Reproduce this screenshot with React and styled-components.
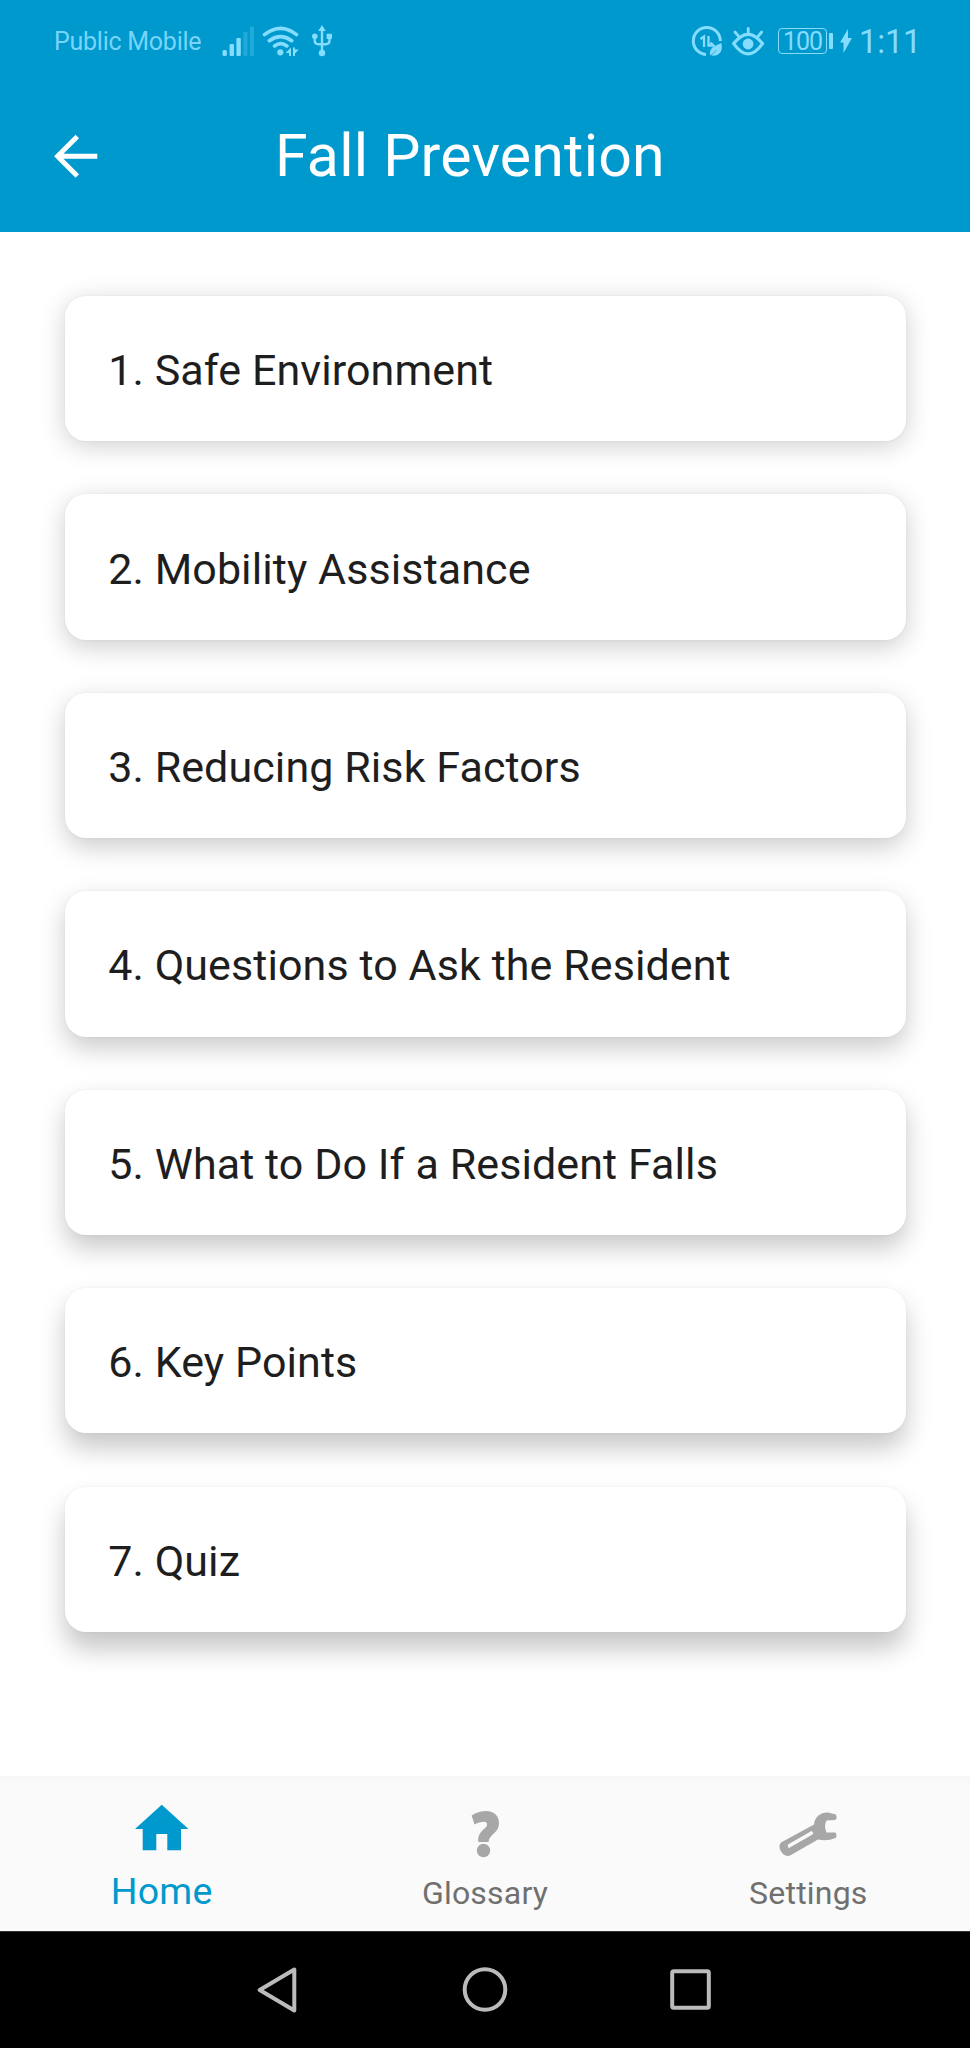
import React from "react";
import styled, { createGlobalStyle } from "styled-components";

const GlobalStyle = createGlobalStyle`
  * { box-sizing: border-box; }
  html, body { margin: 0; padding: 0; background: #fff; }
  body { font-family: Roboto, "Liberation Sans", sans-serif; }
`;

const BLUE = "#0099cd";
const STATUS = "#84dcfe";

const Screen = styled.div`
  width: 970px;
  height: 2048px;
  display: flex;
  flex-direction: column;
  background: #fff;
  overflow: hidden;
`;

const Header = styled.header`
  flex: 0 0 232px;
  background: ${BLUE};
`;

const StatusBar = styled.div`
  height: 82px;
  padding: 0 51px 0 54px;
  display: flex;
  justify-content: space-between;
  color: ${STATUS};
`;

const StatusGroup = styled.div`
  display: flex;
  align-items: center;
  gap: ${(p) => p.$gap || 0}px;

  svg { flex: none; }
`;

const Carrier = styled.span`
  width: 160px;
  padding-top: 2px;
  font-size: 25px;
  line-height: 30px;
  letter-spacing: -0.25px;
  white-space: nowrap;
  opacity: 0.9;
`;

const Clock = styled.span`
  width: 60px;
  padding-top: 1px;
  font-size: 32.5px;
  line-height: 40px;
  letter-spacing: -0.1px;
  white-space: nowrap;
`;

const Battery = styled.span`
  display: flex;
  align-items: center;
  gap: 2px;
  margin-left: 6px;
`;

const BatteryBody = styled.span`
  width: 49px;
  height: 26px;
  border: 1px solid ${STATUS};
  border-radius: 4px;
  font-size: 25px;
  font-weight: 400;
  line-height: 25px;
  text-align: center;
  letter-spacing: -1px;
`;

const BatteryTip = styled.span`
  width: 4px;
  height: 16px;
  border-radius: 1px;
  background: ${STATUS};
`;

const TitleBar = styled.div`
  height: 150px;
  padding-left: 53px;
  display: flex;
  align-items: flex-start;
`;

const BackButton = styled.button`
  display: block;
  width: 46px;
  height: 46px;
  margin-top: 51px;
  padding: 0;
  border: 0;
  background: none;
`;

const Title = styled.h1`
  margin: 39px 0 0 176px;
  font-size: 59px;
  font-weight: 400;
  line-height: 70px;
  letter-spacing: 0.22px;
  color: #fff;
  white-space: nowrap;
`;

const List = styled.main`
  flex: 1;
  padding: 64px 64.5px 0 64.5px;
  display: flex;
  flex-direction: column;
  gap: 53.25px;
`;

const Card = styled.div`
  flex: 0 0 145.2px;
  display: flex;
  align-items: center;
  padding: 3px 43.7px 0;
  border-radius: 21px;
  background: #fff;
  color: #1e1e1e;
  font-size: 43px;
  line-height: 52px;
  letter-spacing: 0.09px;
  white-space: nowrap;
  box-shadow: 0 ${(p) => 5 + p.$depth * 1.9}px 26px rgba(0, 0, 0, ${(p) => 0.19 + p.$depth * 0.006}),
    0 0 3px rgba(0, 0, 0, 0.05);
`;

const TabBar = styled.nav`
  flex: 0 0 155px;
  display: grid;
  grid-template-columns: repeat(3, 1fr);
  background: linear-gradient(#f7f7f7, #fafafa 7px);
`;

const Tab = styled.div`
  display: flex;
  flex-direction: column;
  align-items: center;
  color: ${(p) => (p.$active ? BLUE : "#707070")};

  svg { margin-top: 24px; }
`;

const TabLabel = styled.span`
  margin-top: ${(p) => (p.$active ? 14 : 15)}px;
  font-size: ${(p) => (p.$active ? 37.5 : 32)}px;
  line-height: ${(p) => (p.$active ? 44 : 40)}px;
  letter-spacing: 0.2px;
`;

const SystemNav = styled.footer`
  flex: 0 0 117px;
  display: flex;
  align-items: center;
  justify-content: center;
  gap: 162px;
  padding-right: 1px;
  background: #000;
  border-top: 1px solid #333;
`;

const Signal = () => (
  <svg width="32" height="31" viewBox="182 25 32 31" fill={STATUS}>
    <rect x="182.5" y="49" width="4.4" height="6" rx="1.5" />
    <rect x="189.6" y="43" width="4.4" height="12" rx="1" />
    <rect x="196.4" y="37" width="4.4" height="18" rx="1" />
    <rect x="203.3" y="31" width="4.2" height="24" rx="1" opacity=".25" />
    <rect x="209.8" y="25.5" width="4.2" height="29.5" rx="1" opacity=".25" />
  </svg>
);

const Wifi = () => (
  <svg width="38" height="32" viewBox="262 24 38 32" fill="none" stroke={STATUS} strokeWidth="3.6" strokeLinecap="round">
    <path d="M264.5 33.7q16-12.5 32 0M269.3 39.7q11.2-8 22.4 0M274.5 45q6.2-4.6 12.4 0" />
    <circle cx="280.3" cy="51.3" r="3.1" fill={STATUS} stroke="none" />
    <path d="M291 46.5v8.5h-2v-3h-3.5zM293 46.5v8.5h2v-2.5l3.8-4h-3.8v-2z" fill={STATUS} stroke="none" />
  </svg>
);

const Usb = () => (
  <svg width="25" height="32" viewBox="308 25 25 32" fill={STATUS}>
    <path d="M322 30v22M314.7 38v2.2q0 4 4 4h6.8q4 0 4-4V38" fill="none" stroke={STATUS} strokeWidth="2.4" />
    <path d="M322 25l3.8 6h-7.6z" />
    <circle cx="314.8" cy="36.3" r="2.8" />
    <rect x="326.6" y="33.8" width="5.4" height="5.2" rx=".8" />
    <circle cx="322" cy="53" r="3.2" />
  </svg>
);

const DataSaver = () => (
  <svg width="33" height="32" viewBox="691 25 33 32" fill="none" stroke={STATUS}>
    <path d="M720.3 41A13.5 13.5 0 1 0 706 54.5" strokeWidth="3" />
    <path d="M700.5 39l3.5-2.5v10.500M708.500 36v9.500h5l-3-3" strokeWidth="2.3" />
    <path d="M721.3 43q1.8 7-2 10.5-4 3.5-9.3 1.5-.7-5 3-7.7 3-2 8.3-4.3z" fill={STATUS} stroke="none" />
    <path d="M709.500 56q4-2 7-6" stroke={BLUE} strokeWidth=".7" />
  </svg>
);

const Eye = () => (
  <svg width="34" height="31" viewBox="731 26 34 31" fill="none" stroke={STATUS} strokeWidth="3.2" strokeLinecap="round">
    <path d="M733.7 43.6q14.4-18.5 28.8 0-14.4 20.5-28.8 0z" />
    <circle cx="748.1" cy="44" r="5.4" fill={STATUS} stroke="none" />
    <path d="M748.2 28.3v5M735 32l3.5 4.2M761.7 32l-3.5 4.2" strokeWidth="2.8" />
  </svg>
);

const Bolt = () => (
  <svg width="12" height="24" viewBox="840 29 12 24" fill={STATUS}>
    <path d="M848 29v9h4L843.5 53v-10.5H840z" />
  </svg>
);

const BackArrow = () => (
  <svg width="46" height="46" viewBox="53 133 46 46" fill="none" stroke="#fff" strokeWidth="4.9">
    <path d="M97.3 156.3H58M77.3 136.5L57.5 156.3l19.8 19.8" />
  </svg>
);

const HomeIcon = () => (
  <svg width="54" height="55" viewBox="135 1800 54 55" fill={BLUE}>
    <path d="M161.7 1804.7L188.5 1829H181v21.3h-13.7V1834H156.3v16.3H142.7V1829H135z" />
  </svg>
);

const QuestionIcon = () => (
  <svg width="54" height="58" viewBox="458 1800 54 58" fill="#a7a7a7">
    <path d="M471.6 1815.500C477 1812 482 1811 486 1811C494.500 1811 499 1816 499 1823C499 1833.500 489 1834 488.700 1842H478.300C477.500 1830 487 1829.500 487 1824.500C487 1820.500 481 1821.500 474.500 1824.500Z" />
    <circle cx="483.5" cy="1850.5" r="6.7" />
  </svg>
);

const WrenchIcon = () => (
  <svg width="62" height="58" viewBox="777 1800 62 58" fill="#a7a7a7">
    <path
      fillRule="evenodd"
      d="M814 1824.5C814.5 1817 821 1812 828 1812.5L836 1814.5Q837.5 1819 835 1820L826.5 1820.5Q823.5 1826 826.5 1832.5L835.5 1832.5Q837.5 1836 835.5 1838Q827 1841.5 818 1839.5L791 1855Q787 1857.5 783 1854Q777 1847 781 1842.5ZM788 1844.5Q787 1846.5 789 1848L812.5 1834.5Q814 1832.5 811.5 1831Z"
    />
  </svg>
);

const NavBack = () => (
  <svg width="43" height="46" viewBox="257 1966.5 43 46" fill="none" stroke="#bbb" strokeWidth="4" strokeLinejoin="round">
    <path d="M294.3 1969v41L259.7 1989.5z" />
  </svg>
);

const NavHome = () => (
  <svg width="46" height="46" viewBox="0 0 46 46" fill="none" stroke="#bbb" strokeWidth="4">
    <circle cx="23" cy="22.5" r="20.3" />
  </svg>
);

const NavRecent = () => (
  <svg width="42" height="42" viewBox="0 0 42 42" fill="none" stroke="#bbb" strokeWidth="4">
    <rect x="2.2" y="2.2" width="36.6" height="36.6" rx="1.5" />
  </svg>
);

const lessons = [
  "Safe Environment",
  "Mobility Assistance",
  "Reducing Risk Factors",
  "Questions to Ask the Resident",
  "What to Do If a Resident Falls",
  "Key Points",
  "Quiz",
];

const tabs = [
  { label: "Home", Icon: HomeIcon, active: true },
  { label: "Glossary", Icon: QuestionIcon },
  { label: "Settings", Icon: WrenchIcon },
];

export default function App() {
  return (
    <>
      <GlobalStyle />
      <Screen>
        <Header>
          <StatusBar>
            <StatusGroup $gap={8}>
              <Carrier>Public Mobile</Carrier>
              <Signal />
              <Wifi />
              <Usb />
            </StatusGroup>
            <StatusGroup $gap={7}>
              <DataSaver />
              <Eye />
              <Battery>
                <BatteryBody>100</BatteryBody>
                <BatteryTip />
              </Battery>
              <Bolt />
              <Clock>1:11</Clock>
            </StatusGroup>
          </StatusBar>
          <TitleBar>
            <BackButton aria-label="Back">
              <BackArrow />
            </BackButton>
            <Title>Fall Prevention</Title>
          </TitleBar>
        </Header>
        <List>
          {lessons.map((lesson, i) => (
            <Card key={lesson} $depth={i}>
              {i + 1}. {lesson}
            </Card>
          ))}
        </List>
        <TabBar>
          {tabs.map(({ label, Icon, active }) => (
            <Tab key={label} $active={active}>
              <Icon />
              <TabLabel $active={active}>{label}</TabLabel>
            </Tab>
          ))}
        </TabBar>
        <SystemNav>
          <NavBack />
          <NavHome />
          <NavRecent />
        </SystemNav>
      </Screen>
    </>
  );
}
